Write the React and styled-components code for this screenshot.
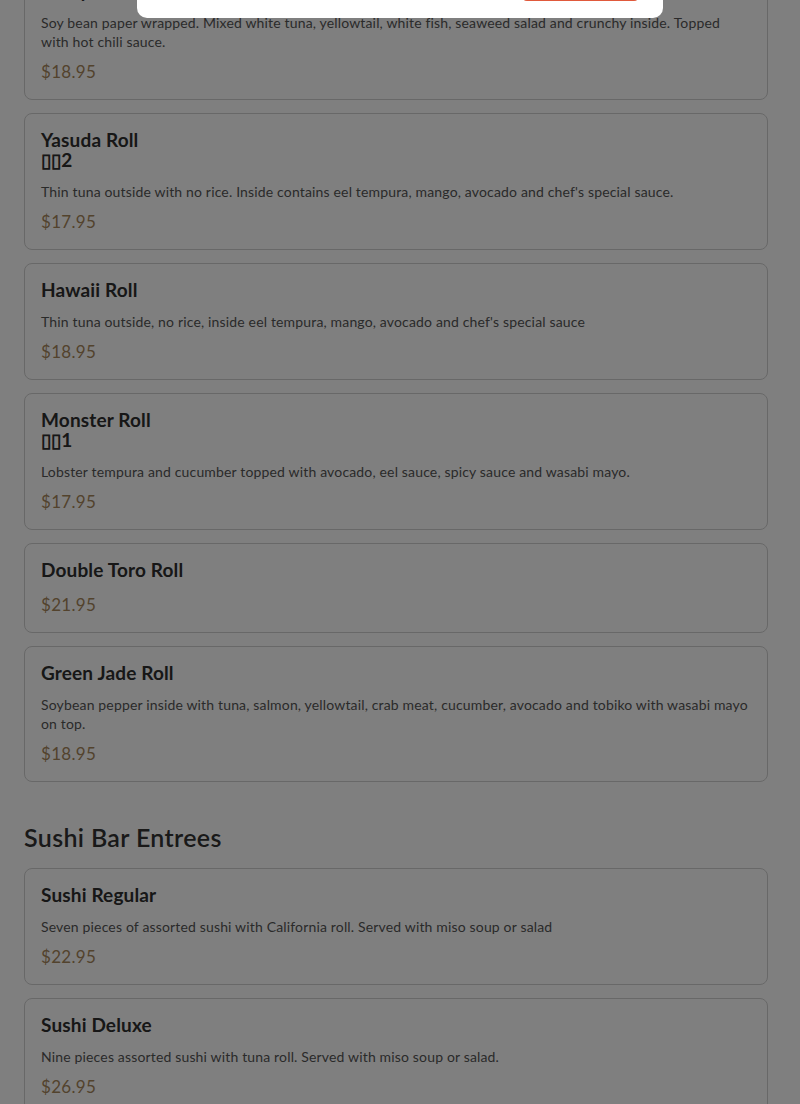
import { useLayoutEffect, useRef } from "react";
import styled, { createGlobalStyle } from "styled-components";

const GlobalStyle = createGlobalStyle`
  html, body {
    margin: 0;
    padding: 0;
    background: #ffffff;
    font-family: Lato, "Noto Sans", sans-serif;
    color: #333333;
  }
  * {
    box-sizing: border-box;
  }
`;

const Scroller = styled.div`
  position: relative;
  height: 100vh;
  overflow-y: auto;
  scrollbar-width: none;
  &::-webkit-scrollbar {
    display: none;
  }
`;

const Main = styled.main`
  display: flex;
  flex-direction: column;
  gap: 40px;
  padding: 24px 32px 40px 24px;
`;

const PageTitle = styled.h1`
  margin: 0;
  font-size: 32px;
  font-weight: 700;
  color: #333333;
`;

const Section = styled.section`
  display: flex;
  flex-direction: column;
`;

const SectionTitle = styled.h2`
  margin: 0 0 16px;
  font-size: 25px;
  line-height: 30px;
  font-weight: 600;
  letter-spacing: 0.35px;
  color: #333333;
`;

const CardList = styled.div`
  display: flex;
  flex-direction: column;
  gap: 13px;
`;

const Card = styled.div`
  background: #ffffff;
  border: 1px solid #d0d0d0;
  border-radius: 8px;
  padding: 16px;
`;

const ItemName = styled.h3`
  margin: 0 0 12px;
  font-size: 19px;
  line-height: 20px;
  font-weight: 700;
  letter-spacing: 0.15px;
  color: #2e2e2e;
`;

const Spice = styled.span`
  display: block;
`;

const ItemDesc = styled.p`
  margin: 0 0 8px;
  font-size: 14px;
  line-height: 19px;
  letter-spacing: 0.16px;
  color: #555555;
`;

const ItemPrice = styled.div`
  padding-top: 1px;
  font-size: 17px;
  line-height: 23px;
  letter-spacing: 0.3px;
  color: #a6865a;
`;

const Overlay = styled.div`
  position: fixed;
  inset: 0;
  background: rgba(0, 0, 0, 0.5);
  z-index: 10;
`;

const Modal = styled.div`
  position: fixed;
  left: 50%;
  bottom: calc(100% - 18px);
  transform: translateX(-50%);
  width: 526px;
  background: #ffffff;
  border-radius: 10px;
  z-index: 11;
  display: flex;
  flex-direction: column;
`;

const ModalBody = styled.div`
  padding: 24px 23px 16px;
  font-size: 16px;
  color: #333333;
`;

const ModalFooter = styled.div`
  display: flex;
  justify-content: flex-end;
  gap: 12px;
  padding: 0 23px 17px;
`;

const ModalButton = styled.button`
  width: 119px;
  height: 40px;
  border-radius: 6px;
  font-family: inherit;
  font-size: 15px;
  border: 1px solid ${(p) => (p.$primary ? "#e0593b" : "transparent")};
  background: ${(p) => (p.$primary ? "#e0593b" : "#ffffff")};
  color: ${(p) => (p.$primary ? "#ffffff" : "#333333")};
`;

const sections = [
  {
    title: "Special Rolls",
    items: [
      {
        name: "Crazy Roll",
        desc: "Soy bean paper wrapped. Mixed white tuna, yellowtail, white fish, seaweed salad and crunchy inside. Topped with hot chili sauce.",
        price: "$18.95",
        anchor: true,
      },
      {
        name: "Yasuda Roll",
        spice: "▯▯2",
        desc: "Thin tuna outside with no rice. Inside contains eel tempura, mango, avocado and chef's special sauce.",
        price: "$17.95",
      },
      {
        name: "Hawaii Roll",
        desc: "Thin tuna outside, no rice, inside eel tempura, mango, avocado and chef's special sauce",
        price: "$18.95",
      },
      {
        name: "Monster Roll",
        spice: "▯▯1",
        desc: "Lobster tempura and cucumber topped with avocado, eel sauce, spicy sauce and wasabi mayo.",
        price: "$17.95",
      },
      { name: "Double Toro Roll", price: "$21.95" },
      {
        name: "Green Jade Roll",
        desc: "Soybean pepper inside with tuna, salmon, yellowtail, crab meat, cucumber, avocado and tobiko with wasabi mayo on top.",
        price: "$18.95",
      },
    ],
  },
  {
    title: "Sushi Bar Entrees",
    items: [
      {
        name: "Sushi Regular",
        desc: "Seven pieces of assorted sushi with California roll. Served with miso soup or salad",
        price: "$22.95",
      },
      {
        name: "Sushi Deluxe",
        desc: "Nine pieces assorted sushi with tuna roll. Served with miso soup or salad.",
        price: "$26.95",
      },
      {
        name: "Sashimi Regular",
        desc: "Fifteen pieces of assorted sashimi. Served with miso soup or salad.",
        price: "$25.95",
      },
    ],
  },
];

export default function App() {
  const scrollRef = useRef(null);
  const anchorRef = useRef(null);

  // page is shown scrolled, with the first visible card cut off at the top
  useLayoutEffect(() => {
    if (scrollRef.current && anchorRef.current) {
      scrollRef.current.scrollTop = anchorRef.current.offsetTop + 36;
    }
  }, []);

  return (
    <>
      <GlobalStyle />
      <Scroller ref={scrollRef}>
        <Main>
          <PageTitle>Menu</PageTitle>
          {sections.map((section) => (
            <Section key={section.title}>
              <SectionTitle>{section.title}</SectionTitle>
              <CardList>
                {section.items.map((item) => (
                  <Card key={item.name} ref={item.anchor ? anchorRef : null}>
                    <ItemName>
                      {item.name}
                      {item.spice && <Spice>{item.spice}</Spice>}
                    </ItemName>
                    {item.desc && <ItemDesc>{item.desc}</ItemDesc>}
                    <ItemPrice>{item.price}</ItemPrice>
                  </Card>
                ))}
              </CardList>
            </Section>
          ))}
        </Main>
      </Scroller>
      <Overlay />
      <Modal>
        <ModalBody>Add this item to your order?</ModalBody>
        <ModalFooter>
          <ModalButton>Cancel</ModalButton>
          <ModalButton $primary>Add to Order</ModalButton>
        </ModalFooter>
      </Modal>
    </>
  );
}
